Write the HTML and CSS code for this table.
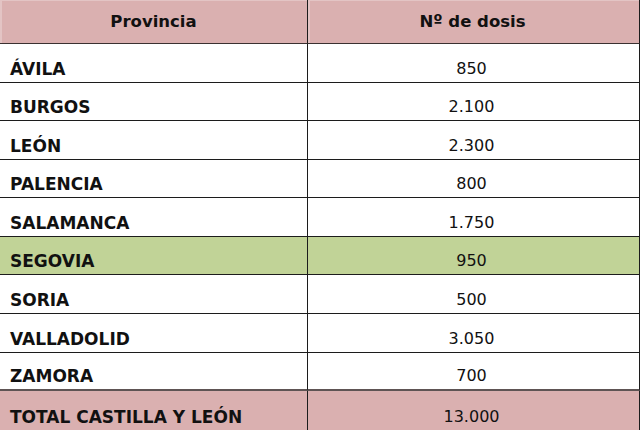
FILE: index.html
```html
<!DOCTYPE html>
<html lang="es">
<head>
<meta charset="utf-8">
<title>Dosis por provincia</title>
<link rel="stylesheet" href="styles.css">
</head>
<body>
<div class="tabla">
  <div class="c head name">Provincia</div>
  <div class="c head num">Nº de dosis</div>

  <div class="c name">ÁVILA</div><div class="c num">850</div>
  <div class="c name">BURGOS</div><div class="c num">2.100</div>
  <div class="c name">LEÓN</div><div class="c num">2.300</div>
  <div class="c name">PALENCIA</div><div class="c num">800</div>
  <div class="c name">SALAMANCA</div><div class="c num">1.750</div>
  <div class="c name green">SEGOVIA</div><div class="c num green">950</div>
  <div class="c name">SORIA</div><div class="c num">500</div>
  <div class="c name">VALLADOLID</div><div class="c num">3.050</div>
  <div class="c name before-total">ZAMORA</div><div class="c num before-total">700</div>
  <div class="c name total">TOTAL CASTILLA Y LEÓN</div><div class="c num total">13.000</div>
</div>
</body>
</html>
```

FILE: styles.css
```css
html, body {
  margin: 0;
  padding: 0;
  background: #ffffff;
}

.tabla {
  width: 640px;
  height: 430px;
  display: grid;
  grid-template-columns: 308px 332px;
  grid-template-rows: 44px 39px 38px 39px 38px 39px 38px 39px 39px 38px 39px;
  font-family: "DejaVu Sans", Verdana, sans-serif;
  color: #111111;
}

.c {
  box-sizing: border-box;
  border-bottom: 1px solid #1c1c1c;
  display: flex;
  align-items: flex-end;
  padding-bottom: 3px;
  line-height: 20px;
}

.name {
  border-right: 1px solid #1c1c1c;
  padding-left: 10px;
  font-weight: bold;
  font-size: 17px;
}

.num {
  border-right: 1px solid #1c1c1c;
  justify-content: center;
  font-size: 16px;
  padding-right: 4px;
}

.head {
  background: #dab0b0;
  align-items: center;
  justify-content: center;
  padding: 0 0 0 0;
  font-weight: bold;
  font-size: 16.5px;
  border-bottom-color: #3a3030;
  box-shadow: inset 2px 1px 0 rgba(255,255,255,0.25);
}

.head.num {
  padding-right: 2px;
}

.green {
  background: #c1d397;
}

.before-total {
  border-bottom: 2px solid #5e5454;
}

.total {
  background: #dab0b0;
  border-bottom: none;
}
```
